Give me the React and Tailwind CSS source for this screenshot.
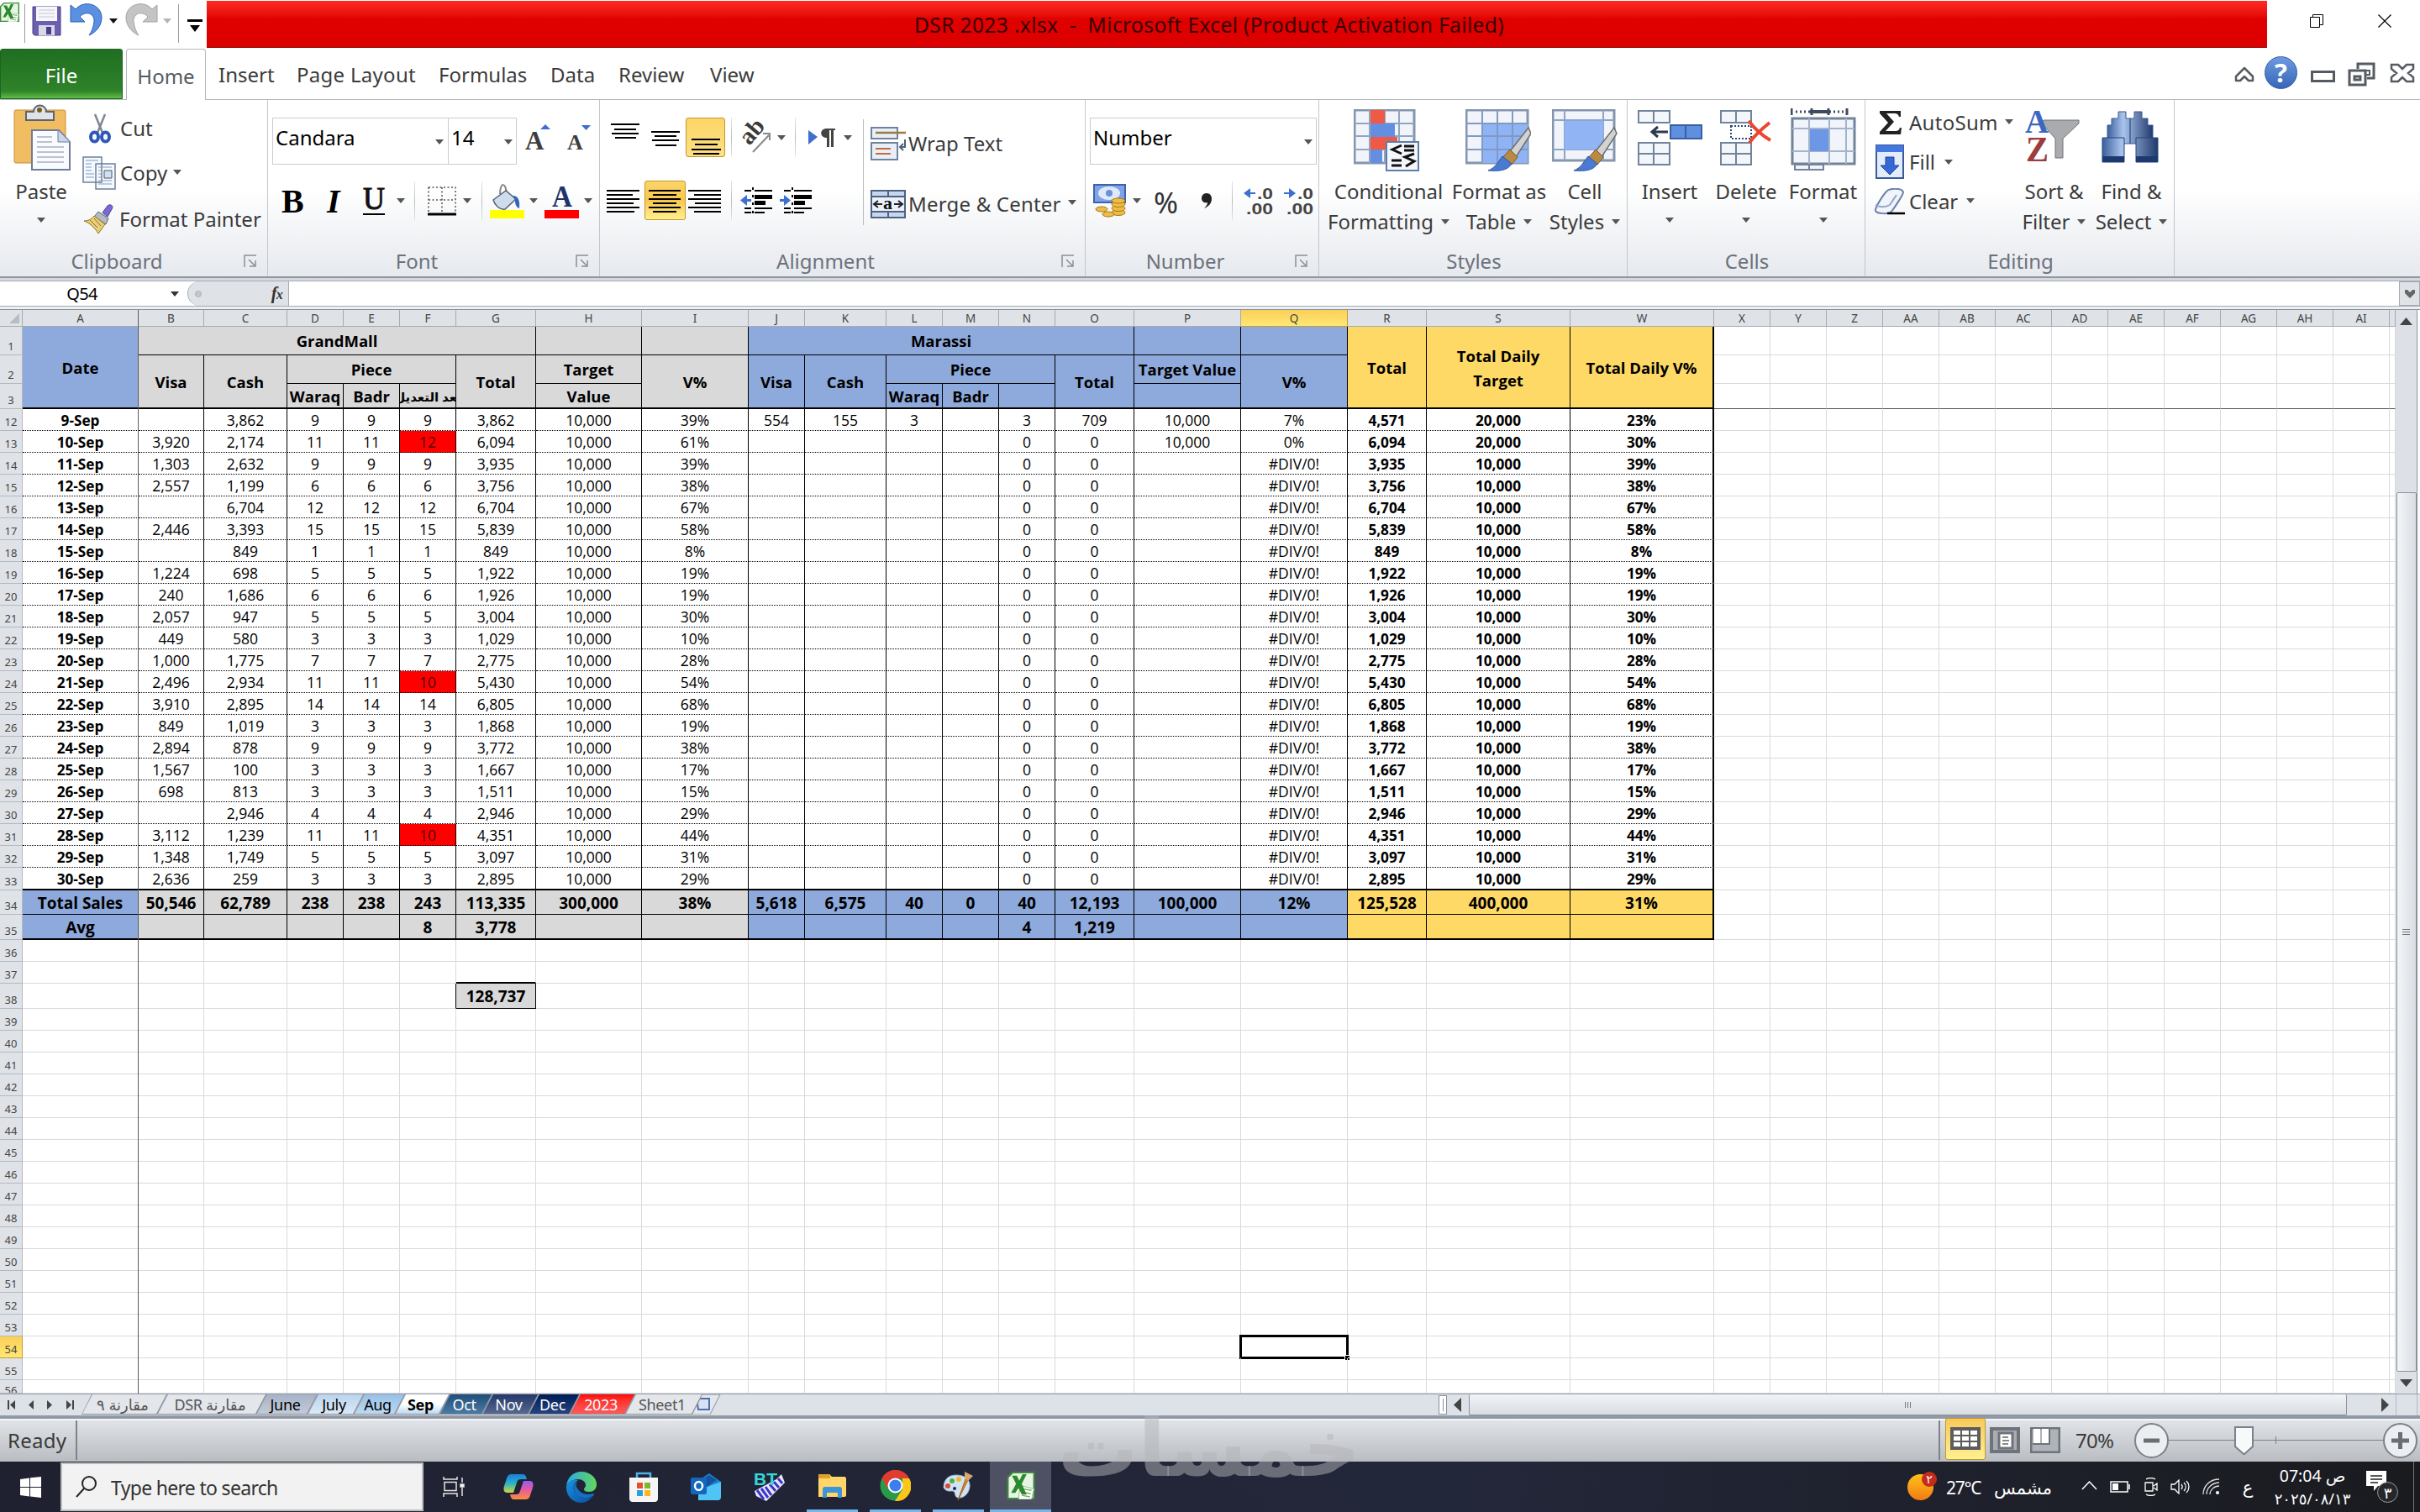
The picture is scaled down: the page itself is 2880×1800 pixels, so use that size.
import { Fragment } from 'react';

const COLS = [
  ['A', 138], ['B', 78], ['C', 99], ['D', 67], ['E', 67], ['F', 67], ['G', 95], ['H', 126], ['I', 127],
  ['J', 67], ['K', 97], ['L', 67], ['M', 67], ['N', 67], ['O', 94], ['P', 127], ['Q', 127], ['R', 94],
  ['S', 171], ['W', 171], ['X', 67], ['Y', 67], ['Z', 67], ['AA', 67], ['AB', 67], ['AC', 67], ['AD', 67],
  ['AE', 67], ['AF', 67], ['AG', 67], ['AH', 67], ['AI', 67], ['', 7],
];
const LETTERS = COLS.map(c => c[0]);
const col = (name) => LETTERS.indexOf(name) + 2;

// date, visa, cash, waraq, badr, adjusted, total, v%
const DAYS = [
  ['9-Sep', '', '3,862', '9', '9', '9', '3,862', '39%'],
  ['10-Sep', '3,920', '2,174', '11', '11', '12', '6,094', '61%'],
  ['11-Sep', '1,303', '2,632', '9', '9', '9', '3,935', '39%'],
  ['12-Sep', '2,557', '1,199', '6', '6', '6', '3,756', '38%'],
  ['13-Sep', '', '6,704', '12', '12', '12', '6,704', '67%'],
  ['14-Sep', '2,446', '3,393', '15', '15', '15', '5,839', '58%'],
  ['15-Sep', '', '849', '1', '1', '1', '849', '8%'],
  ['16-Sep', '1,224', '698', '5', '5', '5', '1,922', '19%'],
  ['17-Sep', '240', '1,686', '6', '6', '6', '1,926', '19%'],
  ['18-Sep', '2,057', '947', '5', '5', '5', '3,004', '30%'],
  ['19-Sep', '449', '580', '3', '3', '3', '1,029', '10%'],
  ['20-Sep', '1,000', '1,775', '7', '7', '7', '2,775', '28%'],
  ['21-Sep', '2,496', '2,934', '11', '11', '10', '5,430', '54%'],
  ['22-Sep', '3,910', '2,895', '14', '14', '14', '6,805', '68%'],
  ['23-Sep', '849', '1,019', '3', '3', '3', '1,868', '19%'],
  ['24-Sep', '2,894', '878', '9', '9', '9', '3,772', '38%'],
  ['25-Sep', '1,567', '100', '3', '3', '3', '1,667', '17%'],
  ['26-Sep', '698', '813', '3', '3', '3', '1,511', '15%'],
  ['27-Sep', '', '2,946', '4', '4', '4', '2,946', '29%'],
  ['28-Sep', '3,112', '1,239', '11', '11', '10', '4,351', '44%'],
  ['29-Sep', '1,348', '1,749', '5', '5', '5', '3,097', '31%'],
  ['30-Sep', '2,636', '259', '3', '3', '3', '2,895', '29%'],
];

const dayRow = (d, i) => {
  const marassi = i === 0
    ? ['554', '155', '3', '', '3', '709', '10,000', '7%']
    : ['', '', '', '', '0', '0', i === 1 ? '10,000' : '', i === 1 ? '0%' : '#DIV/0!'];
  const total = [i === 0 ? '4,571' : d[6], i < 2 ? '20,000' : '10,000', i === 0 ? '23%' : i === 1 ? '30%' : d[7]];
  return [...d.slice(0, 7), '10,000', d[7], ...marassi, ...total];
};

const VALUES = { 38: ['', '', '', '', '', '', '128,737'] };
DAYS.forEach((d, i) => { VALUES[12 + i] = dayRow(d, i); });
VALUES[34] = ['Total Sales', '50,546', '62,789', '238', '238', '243', '113,335', '300,000', '38%', '5,618', '6,575', '40', '0', '40', '12,193', '100,000', '12%', '125,528', '400,000', '31%'];
VALUES[35] = ['Avg', '', '', '', '', '8', '3,778', '', '', '', '', '', '', '4', '1,219'];

const ROWS = Array.from({ length: 45 }, (_, i) => 12 + i);
const rowHeight = (n) => {
  if (n === 33) return 27;
  if (n === 34) return 29;
  if (n === 35 || n === 38) return 30;
  if (n === 56) return 16;
  return 26;
};

const GRAY = 'bg-[#d9d9d9]';
const BLUE = 'bg-[#8ea9db]';
const GOLD = 'bg-[#ffd966]';

// text, first column, last column, first row, row span, fill
const HEADS = [
  ['Date', 'A', 'A', 1, 3, BLUE], ['GrandMall', 'B', 'G', 1, 1, GRAY], ['', 'H', 'H', 1, 1, GRAY], ['', 'I', 'I', 1, 1, GRAY],
  ['Marassi', 'J', 'O', 1, 1, BLUE], ['', 'P', 'P', 1, 1, BLUE], ['', 'Q', 'Q', 1, 1, BLUE],
  ['Total', 'R', 'R', 1, 3, GOLD], ['Total Daily Target', 'S', 'S', 1, 3, GOLD], ['Total Daily V%', 'W', 'W', 1, 3, GOLD],
  ['Visa', 'B', 'B', 2, 2, GRAY], ['Cash', 'C', 'C', 2, 2, GRAY], ['Piece', 'D', 'F', 2, 1, GRAY], ['Total', 'G', 'G', 2, 2, GRAY],
  ['Target', 'H', 'H', 2, 1, GRAY], ['V%', 'I', 'I', 2, 2, GRAY],
  ['Visa', 'J', 'J', 2, 2, BLUE], ['Cash', 'K', 'K', 2, 2, BLUE], ['Piece', 'L', 'N', 2, 1, BLUE], ['Total', 'O', 'O', 2, 2, BLUE],
  ['Target Value', 'P', 'P', 2, 1, BLUE], ['V%', 'Q', 'Q', 2, 2, BLUE],
  ['Waraq', 'D', 'D', 3, 1, GRAY], ['Badr', 'E', 'E', 3, 1, GRAY], ['بعد التعديل', 'F', 'F', 3, 1, GRAY], ['Value', 'H', 'H', 3, 1, GRAY],
  ['Waraq', 'L', 'L', 3, 1, BLUE], ['Badr', 'M', 'M', 3, 1, BLUE], ['', 'N', 'N', 3, 1, BLUE], ['', 'P', 'P', 3, 1, BLUE],
];

export default function App() {
  return (
    <div className="w-[2880px] h-[1800px] overflow-hidden bg-white flex flex-col font-['Noto_Sans','DejaVu_Sans',sans-serif] text-[24px] leading-none text-[#3b3b3b] whitespace-nowrap">
      <TitleBar />
      <TabRow />
      <Ribbon />
      <FormulaBar />
      <div className="h-[1290px] flex bg-white">
        <Sheet />
        <VerticalScroll />
      </div>
      <SheetTabs />
      <StatusBar />
      <Taskbar />
    </div>
  );
}

function Arrow({ className = '', color = '#555' }) {
  return (
    <svg width="10" height="6" viewBox="0 0 10 6" className={`shrink-0 ${className}`}>
      <path d="M0 0h10L5 6z" fill={color} />
    </svg>
  );
}

function Sep({ className = '' }) {
  return <div className={`w-px h-[47px] shrink-0 bg-gradient-to-b from-[#e6e8ea] via-[#b9bcc0] to-[#e6e8ea] ${className}`} />;
}

function TitleBar() {
  return (
    <div className="h-[57px] flex shrink-0">
      <div className="w-[246px] flex items-start">
        <ExcelLogo className="w-[23px] h-[23px] mt-[3px]" />
        <div className="w-px h-[46px] mt-[5px] ml-[6px] bg-[#9a9a9a]" />
        <svg width="35" height="36" viewBox="0 0 35 36" className="ml-[8px] mt-[7px]">
          <path d="M1 1h33v34H3l-2-2z" fill="#6c5fb0" stroke="#4b3f8c" />
          <path d="M5 1h25v17H5z" fill="#f6f7fb" />
          <path d="M8 5h19M8 9h19M8 13h19" stroke="#c5c8d4" />
          <path d="M8 23h19v12H8z" fill="#d7d9e6" />
          <path d="M17 25h6v9h-6z" fill="#4b3f8c" />
        </svg>
        <svg width="41" height="40" viewBox="0 0 41 40" className="ml-[10px] mt-[3px]">
          <path d="M1 3v20h17l-6-6c7-8 18-4 17 6-1 7-3 12-6 16 9-4 15-12 15-21C38 2 17-4 7 8z" fill="#5b8fe0" stroke="#2c5fb4" />
        </svg>
        <Arrow className="ml-[6px] mt-[22px]" color="#111" />
        <svg width="40" height="40" viewBox="0 0 40 40" className="ml-[8px] mt-[3px]">
          <path d="M39 3v20H22l6-6c-7-8-18-4-17 6 1 7 3 12 6 16C8 35 2 27 2 18 2 2 23-4 33 8z" fill="#c4c4c4" stroke="#a2a2a2" />
        </svg>
        <Arrow className="ml-[6px] mt-[22px]" color="#b5b5b5" />
        <div className="w-px h-[46px] mt-[5px] ml-[8px] bg-[#9a9a9a]" />
        <svg width="18" height="15" viewBox="0 0 18 15" className="ml-[10px] mt-[23px]">
          <path d="M0 0h18v3H0zM3 7h12l-6 8z" fill="#000" />
        </svg>
      </div>
      <div className="w-[2452px] h-[56px] mt-px flex items-center justify-center bg-gradient-to-b from-[#ff2a22] via-[#e00000] via-40% to-[#dc0000] border-b border-[#8e1010] text-[#3a0000] text-[24.6px] tracking-[0.014em] whitespace-pre">
        <span className="mr-[66px] pt-[3px]">DSR 2023 .xlsx  -  Microsoft Excel (Product Activation Failed)</span>
      </div>
      <div className="flex">
        <svg width="16" height="16" viewBox="0 0 16 16" className="ml-[51px] mt-[17px]" fill="none" stroke="#000">
          <path d="M.5 3.5h11v12H.5zM3.500 3V.5h12v12H12" />
        </svg>
        <svg width="16" height="16" viewBox="0 0 16 16" className="ml-[65px] mt-[17px]" stroke="#000" strokeWidth="1.200">
          <path d="M.5.5l15 15M15.500.5l-15 15" />
        </svg>
      </div>
    </div>
  );
}

function TabRow() {
  return (
    <div className="h-[62px] flex shrink-0 border-b border-[#b4b7bb]">
      <div className="w-[146px] mt-px pt-[3px] rounded-t-[3px] flex items-center justify-center text-white bg-gradient-to-b from-[#1f6e22] via-[#2f8329] to-[#5fbd45] via-85% border border-[#1d6420]">File</div>
      <div className="w-[95px] ml-[4px] mt-px pt-[3px] h-[61px] rounded-t-[4px] border border-b-0 border-[#b4b7bb] bg-white flex items-center justify-center text-[#555b63]">Home</div>
      <div className="flex items-center pt-[3px]">
        <span className="ml-[15px] w-[93px]">Insert</span>
        <span className="w-[169px] tracking-[0.012em]">Page Layout</span>
        <span className="w-[133px]">Formulas</span>
        <span className="w-[81px]">Data</span>
        <span className="w-[109px]">Review</span>
        <span className="w-[60px]">View</span>
      </div>
      <div className="ml-auto flex items-center pt-[2px] pr-[6px]">
        <svg width="24" height="19" viewBox="0 0 24 19" fill="none" stroke="#555b63" strokeWidth="2.500" strokeLinejoin="round">
          <path d="M12 2l10 10v5h-5l-5-5-5 5H2v-5z" />
        </svg>
        <div className="ml-[12px] mb-[4px] w-[39px] h-[39px] rounded-full border border-[#2f5c9e] bg-gradient-to-b from-[#6d9be0] to-[#3666b8] text-white font-bold text-[31px] flex items-center justify-center">?</div>
        <svg width="29" height="14" viewBox="0 0 29 14" className="ml-[16px] mt-[5px]" fill="none" stroke="#555b63" strokeWidth="3">
          <rect x="1.500" y="1.500" width="26" height="11" />
        </svg>
        <svg width="33" height="29" viewBox="0 0 33 29" className="ml-[15px]" fill="none" stroke="#555b63" strokeWidth="3">
          <path d="M12 8V2h19v17h-8" />
          <path d="M2 10h19v17H2zM8 17h7v4H8z" />
          <path d="M22 10h4v5h-4" strokeWidth="2" />
        </svg>
        <svg width="30" height="24" viewBox="0 0 30 24" className="ml-[17px] mb-[4px]" fill="none" stroke="#555b63" strokeWidth="2.500">
          <path d="M2 2h8l5 5 5-5h8v5l-6 5 6 5v5h-8l-5-5-5 5H2v-5l6-5-6-5z" />
        </svg>
      </div>
    </div>
  );
}

function Group({ label, width, launcher, children }) {
  return (
    <div className={`${width} h-full shrink-0 flex flex-col border-r border-[#c3c6ca]`}>
      <div className="h-[174px] flex">{children}</div>
      <div className="h-[37px] flex items-center">
        <span className="flex-1 text-center text-[#6c727c] pl-[2px] pt-px">{label}</span>
        {launcher && (
          <svg width="16" height="16" viewBox="0 0 16 16" className="ml-[14px] mr-[12px]" fill="none" stroke="#8a8f97" strokeWidth="1.500">
            <path d="M1 15V1h14M6 6l7 7M14 7v7H7" />
          </svg>
        )}
      </div>
    </div>
  );
}

function BigButton({ width, icon, top, bottom, arrow = true }) {
  return (
    <div className={`${width} shrink-0 flex flex-col items-center`}>
      <div className="h-[91px] flex items-start justify-center">{icon}</div>
      <div className="h-[36px] flex items-center">{top}</div>
      <div className="h-[35px] flex items-center">
        {bottom}
        {arrow && <Arrow className={bottom ? 'ml-[9px]' : 'mb-[4px]'} />}
      </div>
    </div>
  );
}

function Ribbon() {
  return (
    <div className="h-[215px] shrink-0 flex flex-col bg-[#d5d9df]">
      <div className="h-[212px] flex bg-gradient-to-b from-white from-50% to-[#e6e9ee] border-b-2 border-[#8f959e]">
        <ClipboardGroup />
        <FontGroup />
        <AlignmentGroup />
        <NumberGroup />
        <Group label="Styles" width="w-[367px]">
          <BigButton width="w-[151px] ml-[7px]" icon={<CondFormatIcon />} top="Conditional" bottom="Formatting" />
          <BigButton width="w-[112px]" icon={<TableStyleIcon />} top="Format as" bottom="Table" />
          <BigButton width="w-[92px]" icon={<CellStyleIcon />} top="Cell" bottom="Styles" />
        </Group>
        <Group label="Cells" width="w-[283px]">
          <BigButton width="w-[84px] ml-[8px]" icon={<InsertIcon />} top="Insert" />
          <BigButton width="w-[98px]" icon={<DeleteIcon />} top="Delete" />
          <BigButton width="w-[85px]" icon={<FormatIcon />} top="Format" />
        </Group>
        <EditingGroup />
      </div>
    </div>
  );
}

function ClipboardGroup() {
  return (
    <Group label="Clipboard" width="w-[319px]" launcher>
      <BigButton width="w-[98px]" top="Paste" icon={
        <svg width="70" height="80" viewBox="0 0 70 80" className="mt-[5px] ml-[4px]">
          <rect x="1" y="7" width="61" height="63" rx="2" fill="#f0bd62" stroke="#c78d31" />
          <path d="M15 9h9c0-10 15-10 15 0h9v10H15z" fill="#dfe3e8" stroke="#5c6470" strokeWidth="2" />
          <circle cx="31" cy="7" r="3" fill="#7d5b20" />
          <path d="M22 31h32l13 14v33H22z" fill="#fafbfe" stroke="#6f7c98" strokeWidth="2" />
          <path d="M53 31v14h14" fill="#c9d6ec" stroke="#6f7c98" />
          <path d="M28 39h18M28 45h18M28 51h32M28 57h32M28 63h32M28 69h32" stroke="#a8b0be" strokeWidth="1.500" />
        </svg>
      } />
      <div className="flex flex-col pt-[7px]">
        <div className="h-[53px] flex items-center">
          <svg width="26" height="36" viewBox="0 0 26 36" className="ml-[8px] mr-[11px]" fill="none">
            <path d="M7 1l9 22M19 1l-9 22" stroke="#7b8796" strokeWidth="2.500" />
            <ellipse cx="6.500" cy="28" rx="4.500" ry="5.500" stroke="#2f57b8" strokeWidth="4" />
            <ellipse cx="19.500" cy="28" rx="4.500" ry="5.500" stroke="#2f57b8" strokeWidth="4" />
          </svg>
          Cut
        </div>
        <div className="h-[54px] flex items-center">
          <svg width="40" height="40" viewBox="0 0 40 40" className="mr-[5px]">
            <path d="M1 1h22v30H1zM16 9h23v30H16z" fill="#f5f8fd" stroke="#6e8099" strokeWidth="1.500" />
            <path d="M4 5h15M4 9h7M4 13h7M4 17h7M4 21h10M4 25h10M19 13h16M19 17h5M19 21h5M19 25h5M19 29h16M19 33h16" stroke="#7f9cc7" />
            <path d="M26 17h9v9h-9z" fill="#cfe0f5" stroke="#555" />
          </svg>
          Copy<Arrow className="ml-[7px] mb-[2px]" />
        </div>
        <div className="h-[55px] flex items-center">
          <svg width="38" height="36" viewBox="0 0 38 36" className="ml-[1px] mr-[5px]">
            <path d="M23 10l6-8c3-3 8 0 5 4l-5 9z" fill="#7a6ad0" stroke="#4d3f9c" />
            <path d="M18 9l12 8-3 7-14-9z" fill="#b5b9c0" stroke="#5d6268" />
            <path d="M13 14l13 10-8 11C14 28 7 22 1 20c5 0 9-2 12-6z" fill="#e8cf77" stroke="#8c7326" />
            <path d="M8 19l9 9M13 17l8 9" stroke="#8c7326" />
          </svg>
          Format Painter
        </div>
      </div>
    </Group>
  );
}

function FontGroup() {
  return (
    <Group label="Font" width="w-[395px]" launcher>
      <div className="flex flex-col">
        <div className="flex ml-[5px] mt-[21px] h-[56px] text-black">
          <div className="w-[210px] border border-[#c9ccd1] bg-white flex items-start pt-[11px] pl-[3px] pr-[5px] justify-between">
            Candara<Arrow className="mt-[14px]" />
          </div>
          <div className="w-[82px] -ml-px border border-[#c9ccd1] bg-white flex items-start pt-[11px] pl-[3px] pr-[4px] justify-between">
            14<Arrow className="mt-[14px]" />
          </div>
          <svg width="30" height="32" viewBox="0 0 30 32" className="ml-[10px] mt-[7px] overflow-visible">
            <text x="0" y="31" fontFamily="Liberation Serif" fontWeight="bold" fontSize="31" fill="#3d3d3d">A</text>
            <path d="M18 7l6-6 6 6z" fill="#3c6fd0" />
          </svg>
          <svg width="28" height="32" viewBox="0 0 28 32" className="ml-[20px] mt-[7px] overflow-visible">
            <text x="0" y="31" fontFamily="Liberation Serif" fontWeight="bold" fontSize="26" fill="#3d3d3d">A</text>
            <path d="M17 2h11l-5.500 6z" fill="#3c6fd0" />
          </svg>
        </div>
        <div className="flex items-center mt-[19px] h-[48px] text-black font-['Liberation_Serif',serif] text-[40px]">
          <span className="ml-[16px] w-[27px] pt-[2px] font-bold">B</span>
          <span className="ml-[27px] w-[18px] pt-[2px] italic font-bold">I</span>
          <svg width="26" height="36" viewBox="0 0 26 36" className="ml-[25px] overflow-visible">
            <text x="0" y="28" fontFamily="Liberation Serif" fontSize="38" fill="#111" stroke="#111" textLength="26" lengthAdjust="spacingAndGlyphs">U</text>
            <path d="M0 34h26" stroke="#000" strokeWidth="2" />
          </svg>
          <Arrow className="ml-[14px]" />
          <Sep className="ml-[11px]" />
          <svg width="34" height="35" viewBox="0 0 34 35" className="ml-[15px]" fill="none">
            <path d="M1 1h32v30M1 1v30M17 1v30M1 16h32" stroke="#555" strokeWidth="1.500" strokeDasharray="2 2.500" />
            <path d="M0 33h34" stroke="#000" strokeWidth="3" />
          </svg>
          <Arrow className="ml-[8px]" />
          <Sep className="ml-[12px]" />
          <svg width="41" height="41" viewBox="0 0 41 41" className="ml-[9px]">
            <path d="M12 12c0-15 8-15 8 3" fill="none" stroke="#888" strokeWidth="2" />
            <path d="M4 19L19 8l12 10-13 12c-6 1-12-4-14-11z" fill="#cfdcec" stroke="#52647c" strokeWidth="1.500" />
            <path d="M27 14c7 0 9 6 8 15-3-1-5-4-5-9z" fill="#3564b8" />
            <path d="M0 31h41v10H0z" fill="#ff0" />
          </svg>
          <Arrow className="ml-[6px]" />
          <svg width="41" height="41" viewBox="0 0 41 41" className="ml-[8px] overflow-visible">
            <text x="9" y="27" fontFamily="Liberation Serif" fontSize="36" fontWeight="bold" fill="#1f3468" textLength="24" lengthAdjust="spacingAndGlyphs">A</text>
            <path d="M0 31h41v10H0z" fill="#f00" />
          </svg>
          <Arrow className="ml-[6px]" />
        </div>
      </div>
    </Group>
  );
}

function Lines({ rows, className = '', width = 34, h = 47 }) {
  return (
    <svg width={width} height={h} viewBox={`0 0 ${width} ${h}`} className={`shrink-0 ${className}`}>
      {rows.map(([x, y, w]) => <rect key={y} x={x} y={y} width={w} height="2" fill="#000" />)}
    </svg>
  );
}

function AlignmentGroup() {
  return (
    <Group label="Alignment" width="w-[578px]" launcher>
      <div className="w-[313px] flex flex-col">
        <div className="mt-[21px] h-[47px] flex items-center">
          <Lines className="ml-[13px]" rows={[[0, 7, 34], [4, 13, 26], [1, 18, 32], [5, 23, 25]]} />
          <Lines className="ml-[14px]" rows={[[0, 16, 34], [4, 21, 26], [1, 26, 32], [5, 32, 25]]} />
          <div className="ml-[7px] w-[47px] h-[47px] rounded-[3px] border border-[#c2962e] bg-gradient-to-b from-[#fbd569] to-[#fee182]">
            <Lines width={45} h={45} rows={[[6, 24, 34], [10, 30, 27], [6, 36, 35], [8, 41, 31]]} />
          </div>
          <Sep className="ml-[7px]" />
          <svg width="38" height="36" viewBox="0 0 38 36" className="ml-[9px] overflow-visible">
            <text transform="translate(12 28) rotate(-50)" fontFamily="Liberation Serif" fontWeight="bold" fontSize="29" fill="#3a3a3a">ab</text>
            <path d="M16 35l19-20M28 13h8v8" fill="none" stroke="#888" strokeWidth="2" />
          </svg>
          <Arrow className="ml-[7px]" />
          <Sep className="ml-[11px]" />
          <svg width="32" height="24" viewBox="0 0 32 24" className="ml-[15px]">
            <path d="M0 3l11 8L0 20z" fill="#3c6fd0" />
            <path d="M22 1h10v2h-2v20h-3V3h-2v20h-3V12c-9 0-9-11 0-11z" fill="#444" />
          </svg>
          <Arrow className="ml-[10px]" />
        </div>
        <div className="mt-[28px] h-[47px] flex items-center">
          <Lines width={39} className="ml-[8px]" rows={[[0, 11, 39], [0, 16, 31], [0, 21, 39], [0, 26, 32], [0, 31, 39], [0, 36, 33]]} />
          <div className="ml-[6px] w-[49px] h-[47px] rounded-[3px] border border-[#c2962e] bg-gradient-to-b from-[#fbd569] via-[#f9c64c] to-[#fff08f]">
            <Lines width={47} h={45} rows={[[4, 10, 38], [9, 15, 28], [4, 20, 38], [9, 25, 28], [4, 30, 38], [9, 35, 28]]} />
          </div>
          <Lines width={39} className="ml-[3px]" rows={[[0, 11, 39], [7, 16, 32], [0, 21, 39], [8, 26, 31], [0, 31, 39], [7, 36, 32]]} />
          <Sep className="ml-[12px]" />
          <IndentIcon className="ml-[10px]" />
          <IndentIcon className="ml-[9px]" flip />
        </div>
      </div>
      <div className="w-px h-[126px] mt-[23px] bg-[#b9bcc0]" />
      <div className="flex flex-col">
        <div className="mt-[19px] h-[65px] flex items-center ml-[8px]">
          <svg width="42" height="40" viewBox="0 0 42 40" className="mr-[3px]">
            <path d="M1 1h31v13H1zM1 19h31v20H1z" fill="#e9eff8" stroke="#70839e" strokeWidth="2" />
            <path d="M6 7h36" stroke="#9b7b3c" strokeWidth="2.500" />
            <path d="M6 26h18M6 32h18" stroke="#c56a3a" strokeWidth="2" />
            <path d="M41 15v9h-5m3-4l-4 4 4 4" fill="none" stroke="#4b607f" strokeWidth="2" />
          </svg>
          Wrap Text
        </div>
        <div className="mt-[7px] h-[65px] flex items-center ml-[8px]">
          <svg width="42" height="34" viewBox="0 0 42 34" className="mr-[3px] overflow-visible">
            <path d="M1 1h40v32H1z" fill="#c7d7f0" stroke="#4e6280" strokeWidth="2" />
            <path d="M1 8h40M1 26h40M21 1v7M21 26v7" stroke="#4e6280" strokeWidth="2" />
            <path d="M2 9h38v16H2z" fill="#eaf1fb" />
            <path d="M5 17h9M37 17h-9M9 13l-5 4 5 4M33 13l5 4-5 4" stroke="#222" strokeWidth="2" fill="none" />
            <text x="15" y="23" fontFamily="Liberation Serif" fontWeight="bold" fontSize="22" fill="#111">a</text>
          </svg>
          <span className="tracking-[0.008em]">Merge &amp; Center</span><Arrow className="ml-[8px] mb-[3px]" />
        </div>
      </div>
    </Group>
  );
}

function IndentIcon({ className = '', flip }) {
  return (
    <svg width="38" height="32" viewBox="0 0 38 32" className={className}>
      <path d="M5 3h8v2H5zM17 3h21v2H17zM5 24h8v2H5zM17 24h21v2H17zM5 29h8v2H5zM17 29h12v2H17zM17 9h21v5H17zM17 16h13v5H17zM14 0h2v3h-2zM14 28h2v3h-2zM14 9h2v3h-2zM14 18h2v3h-2z" fill="#000" />
      <path d={flip ? 'M0 14h5V9l8 6.500L5 22v-5H0z' : 'M13 14H8V9l-8 6.500L8 22v-5h5z'} fill="#3c6fd0" />
    </svg>
  );
}

function NumberGroup() {
  return (
    <Group label="Number" width="w-[278px]" launcher>
      <div className="flex flex-col">
        <div className="mt-[21px] ml-[5px] w-[270px] h-[56px] border border-[#c9ccd1] bg-white text-black flex items-start pt-[11px] pl-[3px] pr-[4px] justify-between">
          Number<Arrow className="mt-[14px]" />
        </div>
        <div className="mt-[19px] h-[48px] flex items-center">
          <svg width="39" height="40" viewBox="0 0 39 40" className="ml-[9px]">
            <path d="M1 1h37v21H1z" fill="#7fa3e6" stroke="#3d63ab" strokeWidth="2" />
            <ellipse cx="19" cy="11" rx="13" ry="8" fill="#dfe9fb" />
            <circle cx="19" cy="11" r="4" fill="#6c90d6" />
            <g fill="#efbd45" stroke="#a77718">
              <ellipse cx="30" cy="34" rx="8" ry="3.500" /><ellipse cx="30" cy="29" rx="8" ry="3.500" /><ellipse cx="30" cy="24" rx="8" ry="3.500" /><ellipse cx="30" cy="20" rx="8" ry="3" />
              <ellipse cx="10" cy="30" rx="7" ry="3" /><ellipse cx="18" cy="36" rx="7" ry="3" />
            </g>
          </svg>
          <Arrow className="ml-[8px]" />
          <span className="ml-[15px] w-[30px] pt-[2px] text-[35px] text-[#333]">%</span>
          <svg width="12" height="18" viewBox="0 0 12 18" className="ml-[27px]">
            <path d="M6 0c4 0 6 3 6 7 0 5-4 9-9 11 3-3 4-5 4-7C3 12 0 10 0 6c0-3 2-6 6-6z" fill="#222" />
          </svg>
          <Sep className="ml-[24px]" />
          <DecimalIcon className="ml-[13px]" />
          <DecimalIcon className="ml-[11px]" flip />
        </div>
      </div>
    </Group>
  );
}

function DecimalIcon({ className, flip }) {
  return (
    <svg width="37" height="34" viewBox="0 0 37 34" className={`overflow-visible ${className}`}>
      <text x="16" y="15" fontFamily="Liberation Sans" fontSize="19" fontWeight="bold" fill="#444" textLength="19" lengthAdjust="spacingAndGlyphs">.0</text>
      <text x="3" y="33" fontFamily="Liberation Sans" fontSize="19" fontWeight="bold" fill="#444" textLength="32" lengthAdjust="spacingAndGlyphs">.00</text>
      <path d={flip ? 'M0 7h6V2l8 6-8 6V9H0z' : 'M14 7H8V2L0 8l8 6V9h6z'} fill="#3c6fd0" />
    </svg>
  );
}

function Brush({ x }) {
  return (
    <g transform={`translate(${x} 0)`}>
      <path d="M48 22L26 50l7 7 18-28z" fill="#d2d2d2" stroke="#6f6f6f" strokeWidth="1.500" />
      <path d="M26 48l9 9-7 9-11-8z" fill="#b98a44" stroke="#7a5822" />
      <path d="M17 56l11 9c-5 8-14 9-28 8 8-3 11-9 17-17z" fill="#4a7ad2" stroke="#2b55a3" />
    </g>
  );
}

function CondFormatIcon() {
  return (
    <svg width="78" height="74" viewBox="0 0 78 74" className="mt-[11px] mr-[5px]">
      <path d="M1 1h71v63H1z" fill="#f1f5fb" stroke="#8495ad" strokeWidth="3" />
      <path d="M19 1v63M37 1v63M54 1v63M1 17h71M1 32h71M1 48h71" stroke="#8fa5c4" strokeWidth="2" />
      <path d="M20 1h17v16H20zM20 33h32v15H20z" fill="#ee5a45" />
      <path d="M20 17h29v16H20zM20 48h14v16H20z" fill="#648fe0" />
      <path d="M39 39h38v34H39z" fill="#f3f7fc" stroke="#5f7da8" strokeWidth="2" />
      <path d="M57 43l-11 5 11 5M60 44h12M60 49h12M45 61h12M45 67h12M72 53l-11 4 11 5-10 6" fill="none" stroke="#111" strokeWidth="3" />
    </svg>
  );
}

function TableStyleIcon() {
  return (
    <svg width="78" height="74" viewBox="0 0 78 74" className="mt-[11px] mr-[3px]">
      <path d="M1 1h73v63H1z" fill="#f1f5fb" stroke="#8495ad" strokeWidth="3" />
      <path d="M20 17h54v47H20z" fill="#8fb3f4" />
      <path d="M20 1v63M38 1v63M56 1v63M1 17h73M1 32h73M1 48h73" stroke="#7f9bc4" strokeWidth="2" />
      <Brush x={27} />
    </svg>
  );
}

function CellStyleIcon() {
  return (
    <svg width="78" height="74" viewBox="0 0 78 74" className="mt-[11px]">
      <path d="M1 1h73v60H1z" fill="#f1f5fb" stroke="#8495ad" strokeWidth="3" />
      <path d="M15 1v60M61 1v60M1 13h73M1 48h73" stroke="#8fa5c4" strokeWidth="2" />
      <path d="M15 14h46v34H15z" fill="#91b4f5" />
      <Brush x={26} />
    </svg>
  );
}

function InsertIcon() {
  return (
    <svg width="78" height="68" viewBox="0 0 78 68" className="mt-[11px]">
      <path d="M2 2h37v14H2zM20 2v14M2 40h37v26H2zM20 40v26M2 53h37" fill="#f3f6fb" stroke="#72839c" strokeWidth="2" />
      <path d="M40 19h37v16H40zM58 19v16" fill="#5f8fe0" stroke="#38609f" strokeWidth="2" />
      <path d="M37 27H20M25 21l-7 6 7 6" fill="none" stroke="#2c3a4e" strokeWidth="3" />
    </svg>
  );
}

function DeleteIcon() {
  return (
    <svg width="64" height="68" viewBox="0 0 64 68" className="mt-[11px]">
      <path d="M2 2h36v14H2zM20 2v14M2 40h36v26H2zM20 40v26M2 53h36" fill="#f3f6fb" stroke="#72839c" strokeWidth="2" />
      <path d="M14 20h24v15H14z" fill="none" stroke="#2d477a" strokeWidth="2" strokeDasharray="2 2" />
      <path d="M35 14c8 10 17 18 26 23M60 16c-10 8-18 15-24 24" fill="none" stroke="#ea4630" strokeWidth="4" />
    </svg>
  );
}

function FormatIcon() {
  return (
    <svg width="78" height="76" viewBox="0 0 78 76" className="mt-[9px]">
      <path d="M1 1v8M67 1v8M25 1v8M45 1v8" stroke="#3d4c60" strokeWidth="3" />
      <path d="M23 5h24" stroke="#3d4c60" strokeWidth="4" />
      <path d="M6 5h58" stroke="#3d4c60" strokeWidth="3" strokeDasharray="2 3" />
      <path d="M5 68h34v6H5zM22 68v6" fill="#f1f5fb" stroke="#72839c" strokeWidth="2" />
      <path d="M2 13h74v54H2z" fill="#f1f5fb" stroke="#72839c" strokeWidth="3" />
      <path d="M22 13v54M46 13v54M66 13v54M2 25h74M2 52h74" stroke="#a5b4ca" strokeWidth="2" />
      <path d="M23 26h22v26H23z" fill="#6c97e6" />
    </svg>
  );
}

function EditingGroup() {
  return (
    <Group label="Editing" width="w-[368px]">
      <div className="w-[181px] flex flex-col pt-[3px]">
        <div className="h-[47px] flex items-center">
          <svg width="28" height="28" viewBox="0 0 28 28" className="ml-[16px] mr-[8px]">
            <path d="M1 0h25v7h-2c-1-3-2-4-6-4H9l9 10L8 24h11c4 0 5-1 6-4h2l-1 8H1v-3l10-11L1 3z" fill="#222" />
          </svg>
          <span className="tracking-[0.012em]">AutoSum</span><Arrow className="ml-[8px] mb-[2px]" />
        </div>
        <div className="h-[47px] flex items-center">
          <svg width="34" height="41" viewBox="0 0 34 41" className="ml-[12px] mr-[6px]">
            <path d="M1 1h32v39H1z" fill="#e3ecfb" stroke="#3a5a98" strokeWidth="2" />
            <path d="M1 1h32v8H1z" fill="#4478e0" />
            <path d="M12 15h10v10h6L17 36 6 25h6z" fill="#3469d4" stroke="#1f489c" />
          </svg>
          Fill<Arrow className="ml-[11px]" />
        </div>
        <div className="h-[47px] flex items-center">
          <svg width="36" height="32" viewBox="0 0 36 32" className="ml-[11px] mr-[5px]">
            <path d="M14 4c3-4 19-5 20 1 0 3-11 19-14 23-3 3-17 3-19-1-1-4 10-20 13-23z" fill="#f0f4fb" stroke="#6d80a8" strokeWidth="2" />
            <path d="M1 20c4 3 12 3 17 0M26 8L18 20" stroke="#93a5c9" strokeWidth="2" fill="none" />
            <path d="M15 30h21" stroke="#000" strokeWidth="2.500" />
          </svg>
          Clear<Arrow className="ml-[10px] mb-[2px]" />
        </div>
      </div>
      <BigButton width="w-[87px]" top="Sort &amp;" bottom="Filter" icon={
        <svg width="66" height="68" viewBox="0 0 66 68" className="mt-[10px] mr-[4px] overflow-visible">
          <path d="M22 14h42v4L45 36v23h-9V36L20 18z" fill="#a9abae" stroke="#717376" />
          <text x="0" y="29" fontFamily="Liberation Serif" fontWeight="bold" fontSize="41" fill="#3a66c4" textLength="28" lengthAdjust="spacingAndGlyphs">A</text>
          <text x="1" y="63" fontFamily="Liberation Serif" fontWeight="bold" fontSize="42" fill="#9d3c3c" textLength="27" lengthAdjust="spacingAndGlyphs">Z</text>
        </svg>
      } />
      <BigButton width="w-[97px]" top="Find &amp;" bottom="Select" icon={
        <svg width="68" height="64" viewBox="0 0 68 64" className="mt-[13px] mr-[4px]">
          <defs>
            <linearGradient id="bino" x1="0" x2="1">
              <stop offset="0" stopColor="#3a5f9e" /><stop offset=".35" stopColor="#a9c4ec" /><stop offset="1" stopColor="#1f3a6c" />
            </linearGradient>
          </defs>
          <path d="M20 1h9v8h5v30h-8V33H7V17h5V9h8zM39 1h9v8h7v8h6v16H42v6h-8V9h5z" fill="url(#bino)" stroke="#3c5a8e" />
          <path d="M1 32h26v29H1zM41 32h26v29H41z" fill="url(#bino)" stroke="#26447a" />
          <path d="M1 54h26v7H1zM41 54h26v7H41z" fill="#1d3a70" />
        </svg>
      } />
    </Group>
  );
}

function FormulaBar() {
  return (
    <div className="h-[35px] shrink-0 bg-[#dfe3e8] flex flex-col">
      <div className="h-[31px] flex border-y border-[#a5abb3]">
        <div className="w-[236px] bg-white flex items-center text-[20px] text-black">
          <span className="w-[195px] text-center tracking-[-0.03em]">Q54</span>
          <Arrow className="ml-[8px]" color="#333" />
        </div>
        <div className="w-[121px] -ml-[13px] rounded-l-full border-l border-r border-[#a5abb3] bg-[#dfe3e8] flex items-center pl-[8px]">
          <div className="w-[8px] h-[8px] rounded-full bg-[#c4c8cd] border border-[#aeb3b9]" />
          <span className="ml-auto mr-[7px] font-['Liberation_Serif',serif] italic font-bold text-[21px] text-[#333] tracking-[-0.04em]">f<span className="text-[16px]">x</span></span>
        </div>
        <div className="flex-1 bg-white" />
        <div className="w-[25px] border border-[#a5abb3] flex items-center justify-center">
          <svg width="12" height="10" viewBox="0 0 12 10"><path d="M0 0h3l3 3 3-3h3v4L6 10 0 4z" fill="#666" /></svg>
        </div>
      </div>
      <div className="h-[4px] border-b border-[#8b929b] bg-[#edf0f3]" />
    </div>
  );
}

function Sheet() {
  const template = {
    gridTemplateColumns: `27px ${COLS.map(c => `${c[1]}px`).join(' ')}`,
    gridTemplateRows: `20px 34px 34px 30px ${ROWS.map(n => `${rowHeight(n)}px`).join(' ')}`,
  };
  return (
    <div className="relative grid w-[2851px] h-[1290px] overflow-hidden font-['Open_Sans','DejaVu_Sans',sans-serif] text-black" style={template}>
      <div className="bg-[#dfe3e8] border-r border-b border-[#a4aab2] flex items-end justify-end p-[3px]">
        <svg width="12" height="12" viewBox="0 0 12 12"><path d="M12 0v12H0z" fill="#b7bdc5" /></svg>
      </div>
      {COLS.map(([name]) => (
        <div
          key={name}
          className={`flex items-center justify-center pt-[2px] border-r border-b font-['Noto_Sans',sans-serif] text-[13.5px] text-[#444] ${name === 'Q' ? 'bg-gradient-to-b from-[#fbcf58] to-[#ffe873] border-[#c29b3a]' : 'bg-[#dfe3e8] border-[#a4aab2]'}`}
        >
          {name}
        </div>
      ))}

      {[1, 2, 3].map(n => <RowLabel key={n} n={n} row={n + 1} />)}
      {HEADS.map(([text, from, to, row, span, fill]) => (
        <div
          key={from + row}
          className={`flex items-center justify-center overflow-hidden pt-[2px] font-bold text-[18.5px] text-center ${fill} ${row + span === 4 ? 'border-b-2' : 'border-b'} ${to === 'W' ? 'border-r-2' : 'border-r'} border-black`}
          style={{ gridColumn: `${col(from)} / ${col(to) + 1}`, gridRow: `${row + 1} / span ${span}` }}
        >
          <HeadText text={text} />
        </div>
      ))}
      {[1, 2, 3].map(n => COLS.slice(20).map(([name]) => (
        <div
          key={name + n}
          className={`border-r border-b border-r-[#d8dade] ${n === 3 ? 'border-b-[#555]' : 'border-b-[#d8dade]'}`}
          style={{ gridColumn: col(name), gridRow: n + 1 }}
        />
      )))}

      {ROWS.map((n, i) => (
        <Fragment key={n}>
          <RowLabel n={n} row={i + 5} />
          {COLS.map(([name], c) => <Cell key={name} n={n} name={name} c={c} />)}
        </Fragment>
      ))}
      {/* freeze pane line */}
      <div className="absolute left-[164px] top-0 w-px h-full bg-[#5c5c5c]" />
    </div>
  );
}

function HeadText({ text }) {
  if (text === 'Total Daily Target') return <span className="w-[120px] whitespace-normal leading-[29px]">{text}</span>;
  if (text === 'بعد التعديل') return <span className="text-[15px] tracking-normal">{text}</span>;
  return text;
}

function RowLabel({ n, row }) {
  return (
    <div
      className={`flex justify-center overflow-hidden border-r border-b font-['Noto_Sans',sans-serif] text-[13px] text-[#444] ${n === 54 ? 'bg-gradient-to-b from-[#fbcf58] to-[#ffe873] border-[#c29b3a]' : 'bg-[#dfe3e8] border-[#b3b9c0]'} ${n === 56 ? 'items-start pt-[6px]' : 'items-end pb-[3px]'}`}
      style={{ gridColumn: 1, gridRow: row }}
    >
      {n}
    </div>
  );
}

function Cell({ n, name, c }) {
  const text = VALUES[n]?.[c] || '';
  const inTable = n <= 35 && c < 20;
  const summary = n === 34 || n === 35;

  let fill = '';
  if (summary && c < 20) fill = c === 0 || (c > 8 && c < 17) ? BLUE : c < 9 ? GRAY : GOLD;
  if (name === 'F' && [13, 24, 31].includes(n)) fill = 'bg-[#ff0000] text-[#4a0000]';
  if (name === 'G' && n === 38) fill = GRAY;

  let border = 'border-r border-b border-[#d8dade]';
  if (inTable) {
    const side = name === 'W' ? 'border-r-2' : 'border-r';
    if (n === 33 || n === 35) border = `${side} border-b-2 border-black`;
    else if (n === 34) border = `${side} border-b border-black`;
    else border = `${side} border-b border-black [border-bottom-style:dotted]`;
  }
  if (n === 37 && name === 'G') border = 'border-r border-b-2 border-r-[#d8dade] border-b-black';
  if (n === 38 && name === 'G') border = 'border-r border-b border-black';
  if (n === 38 && name === 'F') border = 'border-r border-b border-r-black border-b-[#d8dade]';

  let font = 'text-[17.5px]';
  if (summary || n === 38) font = 'text-[19px] font-bold';
  else if (c === 0 || c > 16) font = 'text-[17.2px] font-bold';

  return (
    <div className={`relative flex items-center justify-center pt-[2px] ${fill} ${border} ${font}`}>
      {text}
      {n === 54 && name === 'Q' && (
        <div className="absolute -inset-[2px] border-[3px] border-black">
          <div className="absolute -right-[4px] -bottom-[4px] w-[6px] h-[6px] bg-black border-l border-t border-white" />
        </div>
      )}
    </div>
  );
}

function VerticalScroll() {
  return (
    <div className="w-[26px] flex flex-col items-center bg-[#dde1e7] border-r border-[#8b929b]">
      <svg width="15" height="9" viewBox="0 0 15 9" className="mt-[9px]"><path d="M0 9h15L7.500 0z" fill="#444" /></svg>
      <div className="mt-[199px] w-[24px] h-[1047px] rounded-[2px] border border-[#8b929b] bg-gradient-to-r from-[#f3f5f8] to-[#d9dde3] flex flex-col items-center justify-center gap-[2px]">
        <div className="w-[9px] h-px bg-[#777]" />
        <div className="w-[9px] h-px bg-[#777]" />
        <div className="w-[9px] h-px bg-[#777]" />
      </div>
      <svg width="15" height="9" viewBox="0 0 15 9" className="mt-[9px]"><path d="M0 0h15L7.500 9z" fill="#444" /></svg>
    </div>
  );
}

const TABS = [
  { name: 'مقارنة ٩', w: 'w-[102px]', look: 'bg-[#e3e6eb] text-[#555]' },
  { name: 'DSR مقارنة', w: 'w-[130px]', look: 'bg-[#e3e6eb] text-[#555]' },
  { name: 'June', w: 'w-[73px]', look: 'bg-gradient-to-b from-[#a5b2c6] to-[#c3cbd8] text-black' },
  { name: 'July', w: 'w-[67px]', look: 'bg-gradient-to-b from-[#b9d4ee] to-[#dbe9f6] text-black' },
  { name: 'Aug', w: 'w-[61px]', look: 'bg-gradient-to-b from-[#97c0e6] to-[#bcd9f1] text-black' },
  { name: 'Sep', w: 'w-[65px]', look: 'bg-gradient-to-b from-white via-white to-[#bcd9f1] text-black font-bold' },
  { name: 'Oct', w: 'w-[63px]', look: 'bg-gradient-to-b from-[#1f4e79] to-[#4b7ba3] text-white' },
  { name: 'Nov', w: 'w-[67px]', look: 'bg-gradient-to-b from-[#24386a] to-[#56698f] text-white' },
  { name: 'Dec', w: 'w-[61px]', look: 'bg-gradient-to-b from-[#001c55] to-[#274480] text-white' },
  { name: '2023', w: 'w-[78px]', look: 'bg-gradient-to-b from-[#ff0000] to-[#fb5a5a] text-white' },
  { name: 'Sheet1', w: 'w-[92px]', look: 'bg-[#e3e6eb] text-[#555]' },
];

function SheetTabs() {
  return (
    <div className="h-[30px] shrink-0 flex border-t border-[#9aa0a8] border-b-[4px] border-b-[#9199a5] bg-[#dde1e8]">
      <svg width="97" height="25" viewBox="0 0 97 25" fill="#444">
        <path d="M9 7h2v11H9zM18 7v11l-6-5.500zM40 7v11l-6-5.500zM56 7v11l6-5.500zM79 7v11l6-5.500zM86 7h2v11h-2z" />
      </svg>
      <div className="flex w-[1615px]">
        {TABS.map(t => (
          <div key={t.name} className={`${t.w} h-[24px] -mr-[12px] last:mr-0 shrink-0 bg-[#8a9099] [clip-path:polygon(12px_0,100%_0,calc(100%-12px)_100%,0_100%)]`}>
            <div className={`h-[23px] mx-px pr-[4px] flex items-center justify-center text-[18px] tracking-[-0.02em] [clip-path:polygon(12px_0,100%_0,calc(100%-12px)_100%,0_100%)] ${t.look}`}>{t.name}</div>
          </div>
        ))}
        <svg width="46" height="24" viewBox="0 0 46 24" className="-ml-[12px]">
          <path d="M12 0h33L33 24H0" fill="#e3e6eb" stroke="#8a9099" />
          <path d="M17 5h15v13H19z" fill="#d6e2f4" stroke="#4e6fae" strokeWidth="2" />
          <circle cx="15" cy="7" r="4" fill="#fff" stroke="#e0a02c" strokeWidth="3" />
        </svg>
      </div>
      <div className="w-[10px] my-px border border-[#8b929b] bg-white flex justify-center"><div className="w-px my-[3px] bg-[#8b929b]" /></div>
      <svg width="9" height="17" viewBox="0 0 9 17" className="ml-[8px] mt-[4px]"><path d="M9 0v17L0 8.500z" fill="#444" /></svg>
      <div className="ml-[9px] w-[1045px] border border-t-0 border-[#8b929b] rounded-[2px] bg-gradient-to-b from-[#f1f4f7] to-[#d9dde3] flex items-center justify-center gap-[2px]">
        <div className="w-px h-[7px] bg-[#777]" /><div className="w-px h-[7px] bg-[#777]" /><div className="w-px h-[7px] bg-[#777]" />
      </div>
      <svg width="9" height="17" viewBox="0 0 9 17" className="ml-[41px] mt-[4px]"><path d="M0 0v17l9-8.500z" fill="#444" /></svg>
      <div className="ml-[8px] w-[26px] border-l border-r border-[#b6bbc2]" />
    </div>
  );
}

function StatusBar() {
  return (
    <div className="relative h-[51px] shrink-0 flex items-center pb-[2px] border-t-2 border-[#f4f6f8] bg-gradient-to-b from-[#e0e3e7] to-[#b9bdc2] text-[#3b3b3b]">
      <span className="ml-[9px] w-[81px] tracking-[0.01em]">Ready</span>
      <div className="w-[2px] h-full bg-[#7e8389]" />
      <div className="ml-[2215px] w-[2px] h-full bg-[#7e8389]" />
      <div className="ml-[6px] w-[48px] h-[50px] -mt-[4px] rounded-[3px] border border-[#c2962e] bg-gradient-to-b from-[#f8c95a] to-[#fff08f] flex items-center justify-center">
        <svg width="36" height="27" viewBox="0 0 36 27">
          <path d="M0 0h36v27H0z" fill="#5d5d5d" />
          <path d="M4 4h8v5H4zM14 4h8v5h-8zM24 4h8v5h-8zM4 11h8v5H4zM14 11h8v5h-8zM24 11h8v5h-8zM4 18h8v5H4zM14 18h8v5h-8zM24 18h8v5h-8z" fill="#fff" />
        </svg>
      </div>
      <svg width="36" height="31" viewBox="0 0 36 31" className="ml-[5px]">
        <path d="M2 2h32v27H2z" fill="#a9adb3" stroke="#6f747a" strokeWidth="4" />
        <path d="M11 7h16v18H11z" fill="#fff" stroke="#6f747a" strokeWidth="3" />
        <path d="M15 12h7M15 16h8M15 20h7" stroke="#888" strokeWidth="2" />
      </svg>
      <svg width="36" height="31" viewBox="0 0 36 31" className="ml-[12px]">
        <path d="M1 1h34v29H1z" fill="#aeb3ba" stroke="#6f747a" strokeWidth="3" />
        <path d="M4 2h8v17H4zM14 2h8v17h-8z" fill="#fff" />
        <path d="M3 20h20V2" fill="none" stroke="#6f747a" strokeWidth="2" />
      </svg>
      <span className="ml-[18px] w-[70px] tracking-[-0.03em]">70%</span>
      <ZoomKnob sign="minus" />
      <div className="w-[78px] h-px bg-[#7e8389]" />
      <svg width="23" height="34" viewBox="0 0 23 34">
        <path d="M1 1h21v23l-10 9h-1L1 24z" fill="#f7f9fb" stroke="#7c828a" strokeWidth="2" />
      </svg>
      <div className="w-[26px] h-px bg-[#7e8389]" />
      <div className="w-px h-[9px] bg-[#7e8389]" />
      <div className="w-[127px] h-px bg-[#7e8389]" />
      <ZoomKnob sign="plus" />
      {/* site watermark sits over the status bar and the taskbar */}
      <div className="absolute left-[1256px] top-[-22px] w-[366px] h-[110px] z-10 flex items-center justify-center text-[#b4b4b8]/50 font-['DejaVu_Sans',sans-serif] font-bold text-[95px]">خمسات</div>
    </div>
  );
}

function ZoomKnob({ sign }) {
  return (
    <svg width="41" height="42" viewBox="0 0 41 42" className="shrink-0">
      <ellipse cx="20.500" cy="21" rx="19.500" ry="20" fill="#eceff2" stroke="#7c828a" strokeWidth="2" />
      <path d={sign === 'plus' ? 'M10 21h21M20.500 11v20' : 'M11 21h19'} stroke="#6a6f76" strokeWidth="5" />
    </svg>
  );
}

function ExcelLogo({ className }) {
  return (
    <svg viewBox="0 0 34 34" className={className}>
      <path d="M1 7l6-6h26v32H1z" fill="#e9f5e4" stroke="#3b8d39" strokeWidth="2" />
      <path d="M16 17l17 4-3 13H14z" fill="#fff" stroke="#8abf80" />
      <path d="M19 21l11 2M18 25l11 2M18 29l10 2" stroke="#6fb35f" strokeWidth="1.500" />
      <path d="M6 5h6l3 6 4-8h5l-6 12 6 13h-6l-4-8-4 6H5l6-11z" fill="#2b8a2d" />
    </svg>
  );
}

function Taskbar() {
  return (
    <div className="h-[60px] shrink-0 flex bg-gradient-to-r from-[#1f2130] via-[#23273a] via-60% to-[#1a1b1f] text-white">
      <div className="w-[72px] flex items-center justify-center">
        <svg width="25" height="25" viewBox="0 0 25 25"><path d="M0 3l11-1.500V12H0zM12 1.300L25 0v12H12zM0 13h11v10.500L0 22zM12 13h13v12l-13-1.500z" fill="#fff" /></svg>
      </div>
      <div className="w-[432px] mt-px h-[58px] border-2 border-[#bdbdbd] bg-[#f2f2f2] flex items-center text-[#333] text-[23px] tracking-[-0.03em]">
        <svg width="25" height="26" viewBox="0 0 25 26" className="ml-[16px] mr-[17px]" fill="none" stroke="#222" strokeWidth="2">
          <circle cx="16" cy="9" r="8" /><path d="M10 15L1 25" />
        </svg>
        <span className="pt-[3px]">Type here to search</span>
      </div>
      <div className="flex items-center">
        <svg width="26" height="24" viewBox="0 0 26 24" className="ml-[23px]" fill="none" stroke="#e6e6e6" strokeWidth="1.500">
          <path d="M1 0v3h16V0M1 24v-4h16v4M2 6.500h14v10H2zM23 1v6M23 13v10" /><path d="M21 9h4v3h-4z" fill="#fff" />
        </svg>
        <svg width="36" height="32" viewBox="0 0 36 32" className="ml-[46px]">
          <defs>
            <linearGradient id="cpA" x1="0" y1="0" x2="0" y2="1"><stop offset="0" stopColor="#1b7fe0" /><stop offset=".5" stopColor="#29b3c4" /><stop offset="1" stopColor="#d4d63f" /></linearGradient>
            <linearGradient id="cpB" x1="0" y1="0" x2="0" y2="1"><stop offset="0" stopColor="#9a5cf0" /><stop offset=".5" stopColor="#e85a9b" /><stop offset="1" stopColor="#f7913c" /></linearGradient>
          </defs>
          <path d="M10 1h13c3 0 4 2 5 6h-7c-3 0-4 1-5 4l-4 12H5c-5 0-5-4-4-8l3-9c1-4 3-5 6-5z" fill="url(#cpA)" />
          <path d="M26 31H13c-3 0-4-2-5-6h7c3 0 4-1 5-4l4-12h7c5 0 5 4 4 8l-3 9c-1 4-3 5-6 5z" fill="url(#cpB)" />
        </svg>
        <svg width="37" height="37" viewBox="0 0 37 37" className="ml-[38px]">
          <defs>
            <linearGradient id="edA"><stop offset="0" stopColor="#2aa8e8" /><stop offset="1" stopColor="#63d85a" /></linearGradient>
            <linearGradient id="edB" x1="0" y1="0" x2="1" y2="1"><stop offset="0" stopColor="#1794e0" /><stop offset="1" stopColor="#0c4c9c" /></linearGradient>
          </defs>
          <path d="M1 17C2 7 9 0 19 0c10 0 18 7 18 15 0 6-4 9-9 9-4 0-6-1-6-3s2-2 2-5c0-4-4-7-9-7-7 0-12 4-14 8z" fill="url(#edA)" />
          <path d="M1 17C3 11 9 9 15 10c-5 3-6 7-5 12 2 6 9 9 16 9 3 0 5-1 7-2-4 5-9 8-14 8C8 37 0 28 1 17z" fill="url(#edB)" />
          <path d="M15 10c-3 3-3 8 0 11 4 6 11 7 18 5l1 2c-3 2-6 3-9 3-9 0-15-5-15-11 0-5 2-8 5-10z" fill="#1470c4" />
        </svg>
        <svg width="36" height="36" viewBox="0 0 36 36" className="ml-[38px]">
          <path d="M10 8V2h16v6" fill="none" stroke="#4cb4ea" strokeWidth="2.500" />
          <path d="M1 7h34v25c0 2-1 4-4 4H5c-3 0-4-2-4-4z" fill="#f5f5f5" />
          <path d="M10 13h7v7h-7z" fill="#e8502c" /><path d="M19 13h7v7h-7z" fill="#7eb72c" /><path d="M10 22h7v7h-7z" fill="#2aa0e2" /><path d="M19 22h7v7h-7z" fill="#f8b81c" />
        </svg>
        <svg width="38" height="32" viewBox="0 0 38 32" className="ml-[38px]">
          <path d="M8 9L22 0l14 10v18c0 2-1 4-4 4H10z" fill="#1f7fd6" />
          <path d="M9 20l27-10v18c0 2-1 4-4 4H9z" fill="#50c4f5" />
          <path d="M9 10l13-8 9 6-22 15z" fill="#14549f" />
          <rect x="0" y="5" width="19" height="20" rx="2" fill="#1168bd" />
          <ellipse cx="9.500" cy="15" rx="4.500" ry="5" fill="none" stroke="#fff" strokeWidth="2.500" />
        </svg>
        <svg width="37" height="36" viewBox="0 0 37 36" className="ml-[37px] overflow-visible">
          <path d="M33 3l4 10-22 22L3 29 1 23 27 9z" fill="#e8e8ff" />
          <path d="M4 22l8 11M9 20l8 11M14 18l7 10M19 15l7 8M24 12l6 7M29 8l5 6" stroke="#3b34c8" strokeWidth="3" />
          <text x="0" y="16" fontFamily="Liberation Sans" fontWeight="bold" fontSize="21" fill="#35d7d7" textLength="28" lengthAdjust="spacingAndGlyphs">BT</text>
        </svg>
      </div>
      <TaskItem className="ml-[26px] w-[61px]">
        <svg width="33" height="28" viewBox="0 0 33 28">
          <path d="M0 2c0-1 1-2 2-2h11l3 3h15c1 0 2 1 2 2v20c0 1-1 2-2 2H0z" fill="#ffd667" /><path d="M0 0h14v5H0z" fill="#dda02a" />
          <path d="M5 28V18c0-2 1-3 3-3h17c2 0 3 1 3 3v10h-5v-6H10v6z" fill="#3d94d9" />
        </svg>
      </TaskItem>
      <TaskItem className="ml-[14px] w-[61px]">
        <svg width="37" height="37" viewBox="0 0 37 37">
          <circle cx="18.500" cy="18.500" r="18" fill="#2a9a48" />
          <path d="M2.500 10A18 18 0 0 1 35 10H18.500L10 22z" fill="#e23c30" />
          <path d="M35 10a18 18 0 0 1-17 27l9-14V10z" fill="#fbc71a" />
          <circle cx="18.500" cy="18.500" r="9" fill="#fff" /><circle cx="18.500" cy="18.500" r="7" fill="#3c7df0" />
        </svg>
      </TaskItem>
      <TaskItem className="ml-[14px] w-[61px]">
        <svg width="37" height="36" viewBox="0 0 37 36">
          <path d="M16 5c11 0 17 6 16 14-1 9-8 14-14 13-5-1-2-7-6-8-4 0-8 1-11-4C1 11 6 5 16 5z" fill="#cfe3f3" stroke="#8fb3ce" />
          <circle cx="6" cy="18" r="3" fill="#d84a3c" /><circle cx="11" cy="12" r="3" fill="#4fae4a" /><circle cx="19" cy="10" r="3" fill="#f0b62c" /><circle cx="14" cy="21" r="2" fill="#23273a" />
          <path d="M18 35l9-25 3 1z" fill="#e08a2c" stroke="#a45f18" /><path d="M26 1l10 5-6 6-4-3z" fill="#d9a76a" />
        </svg>
      </TaskItem>
      <TaskItem className="ml-[7px] w-[73px] bg-[#4d5163]">
        <ExcelLogo className="w-[34px] h-[33px]" />
      </TaskItem>
      <div className="ml-auto flex items-center text-[21px]">
        <div className="relative w-[31px] h-[31px] rounded-full bg-gradient-to-b from-[#ffc21a] to-[#f07a14]">
          <div className="absolute -right-[4px] -top-[3px] w-[18px] h-[18px] rounded-full bg-[#c42b1c] text-[14px] flex items-center justify-center">٢</div>
        </div>
        <span className="ml-[15px] w-[44px] pt-[2px] tracking-[-0.06em]">27°C</span>
        <span className="ml-[13px] w-[64px] pt-[2px] text-center">مشمس</span>
        <svg width="19" height="11" viewBox="0 0 19 11" className="ml-[40px] mb-[4px]" fill="none" stroke="#fff" strokeWidth="1.500"><path d="M1 10l8.500-9 8.500 9" /></svg>
        <svg width="24" height="14" viewBox="0 0 24 14" className="ml-[15px]"><path d="M1 1h20v12H1zM23 4v6" fill="none" stroke="#fff" strokeWidth="1.500" /><path d="M3 3h7v8H3z" fill="#fff" /></svg>
        <svg width="18" height="22" viewBox="0 0 18 22" className="ml-[16px]" fill="none" stroke="#fff" strokeWidth="1.300"><path d="M2 6h9v10H2zM12 10l4-3v8l-4-3M3 2c3-2 8-2 11 0M3 20c3 2 8 2 11 0" /></svg>
        <svg width="23" height="18" viewBox="0 0 23 18" className="ml-[14px]" fill="none" stroke="#fff" strokeWidth="1.300"><path d="M1 6h4l5-5v16l-5-5H1zM13 6c1.500 2 1.500 4 0 6M16 4c3 3 3 7 0 10M19 2c4 4 4 10 0 14" /></svg>
        <svg width="21" height="20" viewBox="0 0 21 20" className="ml-[15px]" fill="none" stroke="#ddd" strokeWidth="1.300"><path d="M1 19C1 9 9 1 20 1M5 19C5 11 12 5 20 5M9 19c0-5 5-10 11-10" /><circle cx="18" cy="17" r="2" fill="#fff" stroke="none" /></svg>
        <span className="ml-[26px] w-[14px] text-center">ع</span>
        <div className="ml-[28px] w-[84px] flex flex-col items-center gap-[8px] text-[19.5px]">
          <span className="tracking-[-0.02em]">07:04 ص</span>
          <span className="text-[18px] tracking-[-0.03em]">٢٠٢٥/٠٨/١٣</span>
        </div>
        <div className="relative w-[38px] h-[38px] ml-[22px] mr-[18px]">
          <svg width="24" height="24" viewBox="0 0 24 24"><path d="M0 0h24v18H14l-5 6v-6H0z" fill="#fff" /><path d="M5 6h14M5 10h14M5 14h9" stroke="#222" strokeWidth="1.500" /></svg>
          <div className="absolute right-0 bottom-0 w-[25px] h-[25px] rounded-full border border-[#999] bg-[#26272b] text-[18px] flex items-center justify-center">٣</div>
        </div>
        <div className="w-px h-full bg-[#777] mr-[7px]" />
      </div>
    </div>
  );
}

function TaskItem({ className, children }) {
  return (
    <div className={`${className} flex items-center justify-center border-b-[3px] border-[#76b5ea]`}>
      {children}
    </div>
  );
}
